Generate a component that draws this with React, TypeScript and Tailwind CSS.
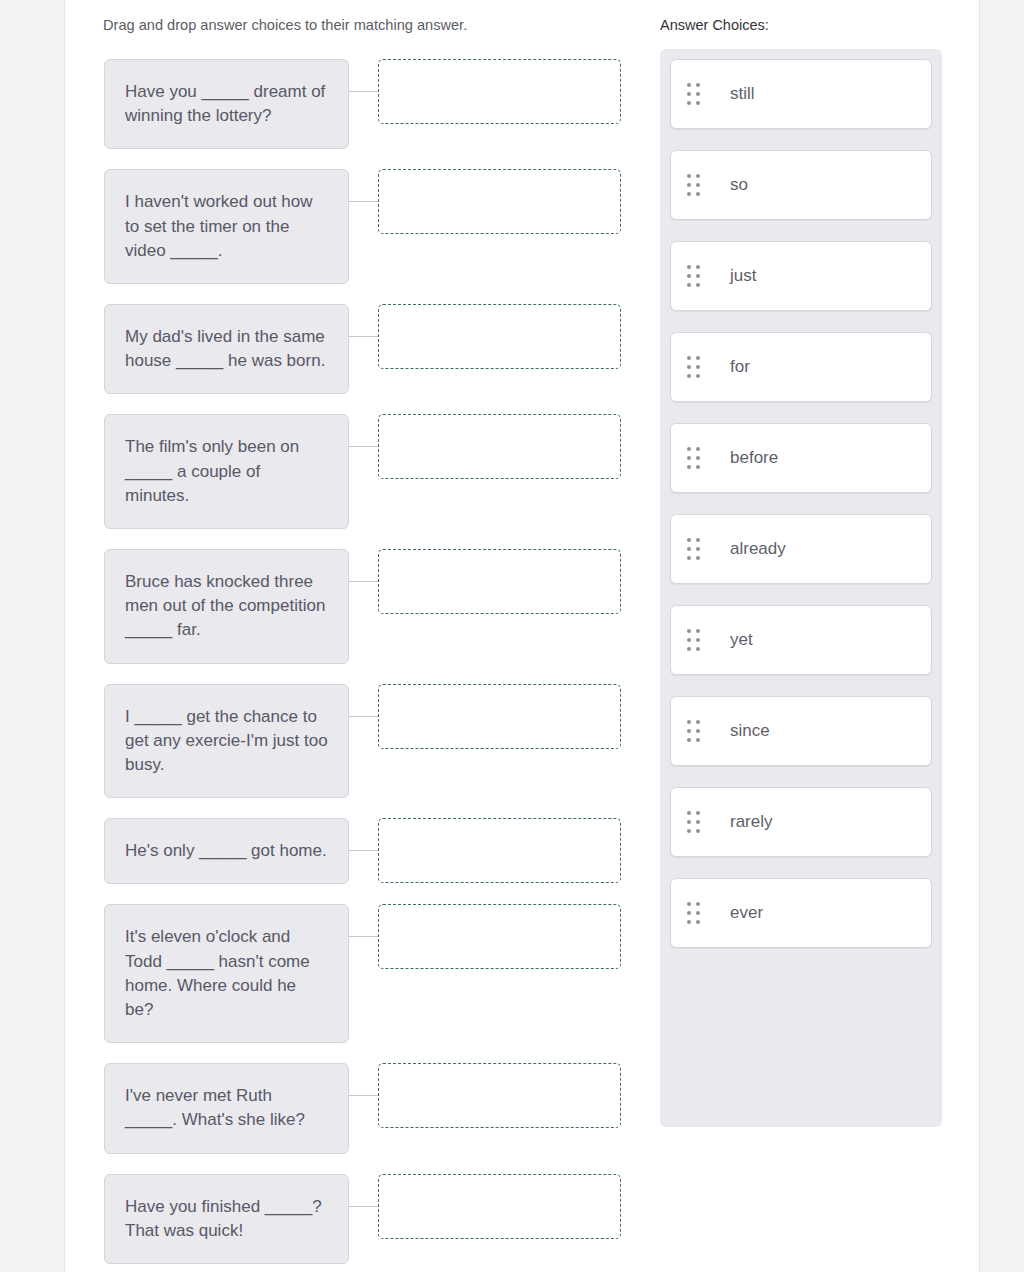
import React from "react";

const questions: string[][] = [
  ["Have you _____ dreamt of", "winning the lottery?"],
  ["I haven't worked out how", "to set the timer on the", "video _____."],
  ["My dad's lived in the same", "house _____ he was born."],
  ["The film's only been on", "_____ a couple of", "minutes."],
  ["Bruce has knocked three", "men out of the competition", "_____ far."],
  ["I _____ get the chance to", "get any exercie-I'm just too", "busy."],
  ["He's only _____ got home."],
  ["It's eleven o'clock and", "Todd _____ hasn't come", "home. Where could he", "be?"],
  ["I've never met Ruth", "_____. What's she like?"],
  ["Have you finished _____?", "That was quick!"],
];

const choices: string[] = ["still", "so", "just", "for", "before", "already", "yet", "since", "rarely", "ever"];

function Handle() {
  const pts = [
    [3, 3],
    [12, 3],
    [3, 12],
    [12, 12],
    [3, 21],
    [12, 21],
  ];
  return (
    <svg width="16" height="24" viewBox="0 0 16 24" className="shrink-0">
      {pts.map(([x, y], i) => (
        <circle key={i} cx={x} cy={y} r="2" fill="#919199" />
      ))}
    </svg>
  );
}

export default function App() {
  return (
    <div
      className="min-h-[1272px] bg-[#f3f3f6]"
      style={{ fontFamily: '"Liberation Sans", Arial, sans-serif' }}
    >
      <div className="ml-[64px] w-[916px] min-h-[1272px] bg-white border-x border-[#e4e4e8] pl-[39px] pt-[16px]">
        <div className="flex gap-[39px]">
          {/* left column */}
          <div className="w-[517px]">
            <div className="text-[14.6px] leading-[18px] text-[#5c5c66] -ml-px">
              Drag and drop answer choices to their matching answer.
            </div>
            <div className="mt-[25px] flex flex-col gap-[20px]">
              {questions.map((lines, i) => (
                <div key={i} className="flex items-start">
                  <div className="w-[245px] rounded-md border border-[#d4d4da] bg-[#e9e9ee] pl-[20px] pr-[14px] py-[20px] text-[17px] leading-[24.2px] text-[#585866]">
                    {lines.map((l, j) => (
                      <div key={j} className="whitespace-nowrap">
                        {l}
                      </div>
                    ))}
                  </div>
                  <div className="flex h-[65px] w-[29px] items-center">
                    <div className="h-px w-full bg-[#c8c8cc]" />
                  </div>
                  <div className="h-[65px] w-[243px] rounded-[5px] border border-dashed border-[#3f6f4c]" />
                </div>
              ))}
            </div>
          </div>
          {/* right column */}
          <div className="w-[282px]">
            <div className="text-[14.5px] leading-[18px] text-[#333338]">Answer Choices:</div>
            <div className="mt-[15px] h-[1078px] rounded-md bg-[#e9e9ee] p-[10px]">
              <div className="flex flex-col gap-[21px]">
                {choices.map((c) => (
                  <div
                    key={c}
                    className="flex h-[70px] items-center rounded-md border border-[#d6d6dc] bg-white pl-[15px] shadow-[0_1px_1px_rgba(0,0,0,0.06)]"
                  >
                    <Handle />
                    <span className="ml-[28px] text-[17px] text-[#5f5f6a]">{c}</span>
                  </div>
                ))}
              </div>
            </div>
          </div>
        </div>
      </div>
    </div>
  );
}
